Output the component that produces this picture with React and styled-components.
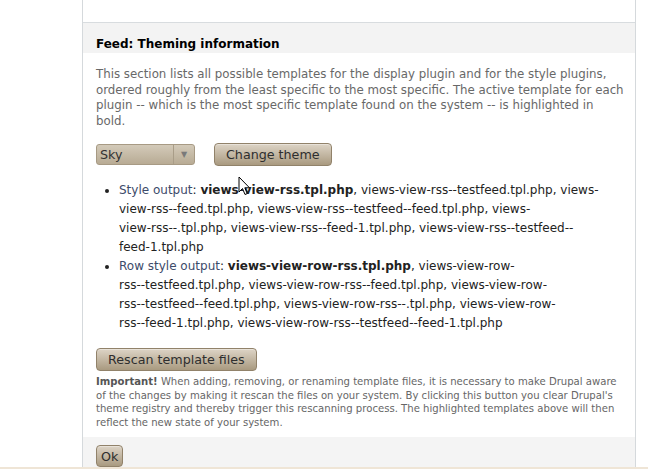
import React from 'react';
import styled, { createGlobalStyle } from 'styled-components';

const GlobalStyle = createGlobalStyle`
  html, body {
    margin: 0;
    padding: 0;
    background: #fff;
  }
  body {
    font-family: "DejaVu Sans", Verdana, sans-serif;
    color: #222;
  }
`;

const Page = styled.div`
  position: relative;
  width: 648px;
  height: 469px;
  overflow: hidden;
  display: flex;
  flex-direction: column;
`;

const Columns = styled.div`
  flex: 1;
  display: flex;
  min-height: 0;
`;

const Gutter = styled.div`
  width: ${p => p.$w}px;
  flex-shrink: 0;
`;

const Panel = styled.div`
  width: 552px;
  border-left: 1px solid #d5d9dc;
  border-right: 1px solid #d5d9dc;
  display: flex;
  flex-direction: column;
`;

const TopSpace = styled.div`
  height: 22px;
  border-bottom: 1px solid #d8dcdf;
`;

const Header = styled.h3`
  margin: 0;
  background: #f3f3f3;
  padding: 14px 13px 1px;
  font-size: 12px;
  line-height: 15px;
  font-weight: bold;
  color: #000;
`;

const Body = styled.div`
  padding: 14px 10px 0 13px;
`;

const Description = styled.p`
  margin: 0 0 13px;
  font-size: 11.8px;
  line-height: 15.7px;
  color: #686868;
  white-space: nowrap;
`;

const Controls = styled.div`
  display: flex;
  align-items: center;
  gap: 19px;
  height: 23px;
`;

const Select = styled.div`
  width: 97px;
  height: 19px;
  display: flex;
  align-items: stretch;
  border: 1px solid #a79a84;
  border-radius: 3px;
  background: linear-gradient(#d3cab9, #b8ab94);
  font-size: 12.7px;
  color: #333;
`;

const SelectValue = styled.span`
  flex: 1;
  padding-left: 3px;
  line-height: 19px;
`;

const SelectArrow = styled.span`
  width: 20px;
  border-left: 1px solid #a99d88;
  display: flex;
  align-items: center;
  justify-content: center;
  font-size: 8px;
  color: #7a7a7a;
`;

const Button = styled.button`
  font-family: "DejaVu Sans", Verdana, sans-serif;
  font-size: 12.7px;
  color: #2e2e2e;
  height: ${p => (p.$compact ? 22 : 23)}px;
  padding: 0 ${p => (p.$compact ? 4 : 11)}px;
  border: 1px solid #91826a;
  border-radius: 4px;
  background: linear-gradient(#ddd4c6, #a99a80);
  box-shadow: inset 0 1px 0 rgba(255, 255, 255, 0.35);
  cursor: pointer;
`;

const List = styled.ul`
  margin: 15px 0 15px;
  padding-left: 23px;
  font-size: 12px;
  line-height: 19px;
  color: #222;
`;

const Item = styled.li``;

const Label = styled.span`
  color: #3d4b6a;
`;

const Note = styled.div`
  margin-top: 4px;
  font-size: 10.1px;
  line-height: 13.8px;
  color: #666;
  strong {
    color: #555;
  }
`;

const Footer = styled.div`
  margin-top: auto;
  background: #f4f4f4;
  height: 30px;
  padding: 8px 13px 0;
  box-sizing: border-box;
`;

const Strip = styled.div`
  height: 2px;
  background: #efe5d6;
  flex-shrink: 0;
`;

const Cursor = styled.svg`
  position: absolute;
  left: 238px;
  top: 176px;
`;

function Panes() {
  return (
    <Panel>
      <TopSpace />
      <Header>Feed: Theming information</Header>
      <Body>
        <Description>
          This section lists all possible templates for the display plugin and for the style plugins,<br />
          ordered roughly from the least specific to the most specific. The active template for each<br />
          plugin -- which is the most specific template found on the system -- is highlighted in<br />
          bold.
        </Description>
        <Controls>
          <Select>
            <SelectValue>Sky</SelectValue>
            <SelectArrow>▼</SelectArrow>
          </Select>
          <Button>Change theme</Button>
        </Controls>
        <List>
          <Item>
            <Label>Style output</Label>: <strong>views-view-rss.tpl.php</strong>, views-view-rss--testfeed.tpl.php, views-<br />
            view-rss--feed.tpl.php, views-view-rss--testfeed--feed.tpl.php, views-<br />
            view-rss--.tpl.php, views-view-rss--feed-1.tpl.php, views-view-rss--testfeed--<br />
            feed-1.tpl.php
          </Item>
          <Item>
            <Label>Row style output</Label>: <strong>views-view-row-rss.tpl.php</strong>, views-view-row-<br />
            rss--testfeed.tpl.php, views-view-row-rss--feed.tpl.php, views-view-row-<br />
            rss--testfeed--feed.tpl.php, views-view-row-rss--.tpl.php, views-view-row-<br />
            rss--feed-1.tpl.php, views-view-row-rss--testfeed--feed-1.tpl.php
          </Item>
        </List>
        <Button>Rescan template files</Button>
        <Note>
          <strong>Important!</strong> When adding, removing, or renaming template files, it is necessary to make Drupal aware
          of the changes by making it rescan the files on your system. By clicking this button you clear Drupal's
          theme registry and thereby trigger this rescanning process. The highlighted templates above will then
          reflect the new state of your system.
        </Note>
      </Body>
      <Footer>
        <Button $compact>Ok</Button>
      </Footer>
    </Panel>
  );
}

export default function App() {
  return (
    <Page>
      <GlobalStyle />
      <Columns>
        <Gutter $w={82} />
        <Panes />
        <Gutter $w={12} />
      </Columns>
      <Strip />
      <Cursor width="13" height="20" viewBox="0 0 13 20">
        <path d="M1 1 L1 16 L4.5 12.5 L7 18.5 L9.2 17.6 L6.8 11.8 L11.5 11.8 Z" fill="#fff" stroke="#000" strokeWidth="1" strokeLinejoin="round" />
      </Cursor>
    </Page>
  );
}
